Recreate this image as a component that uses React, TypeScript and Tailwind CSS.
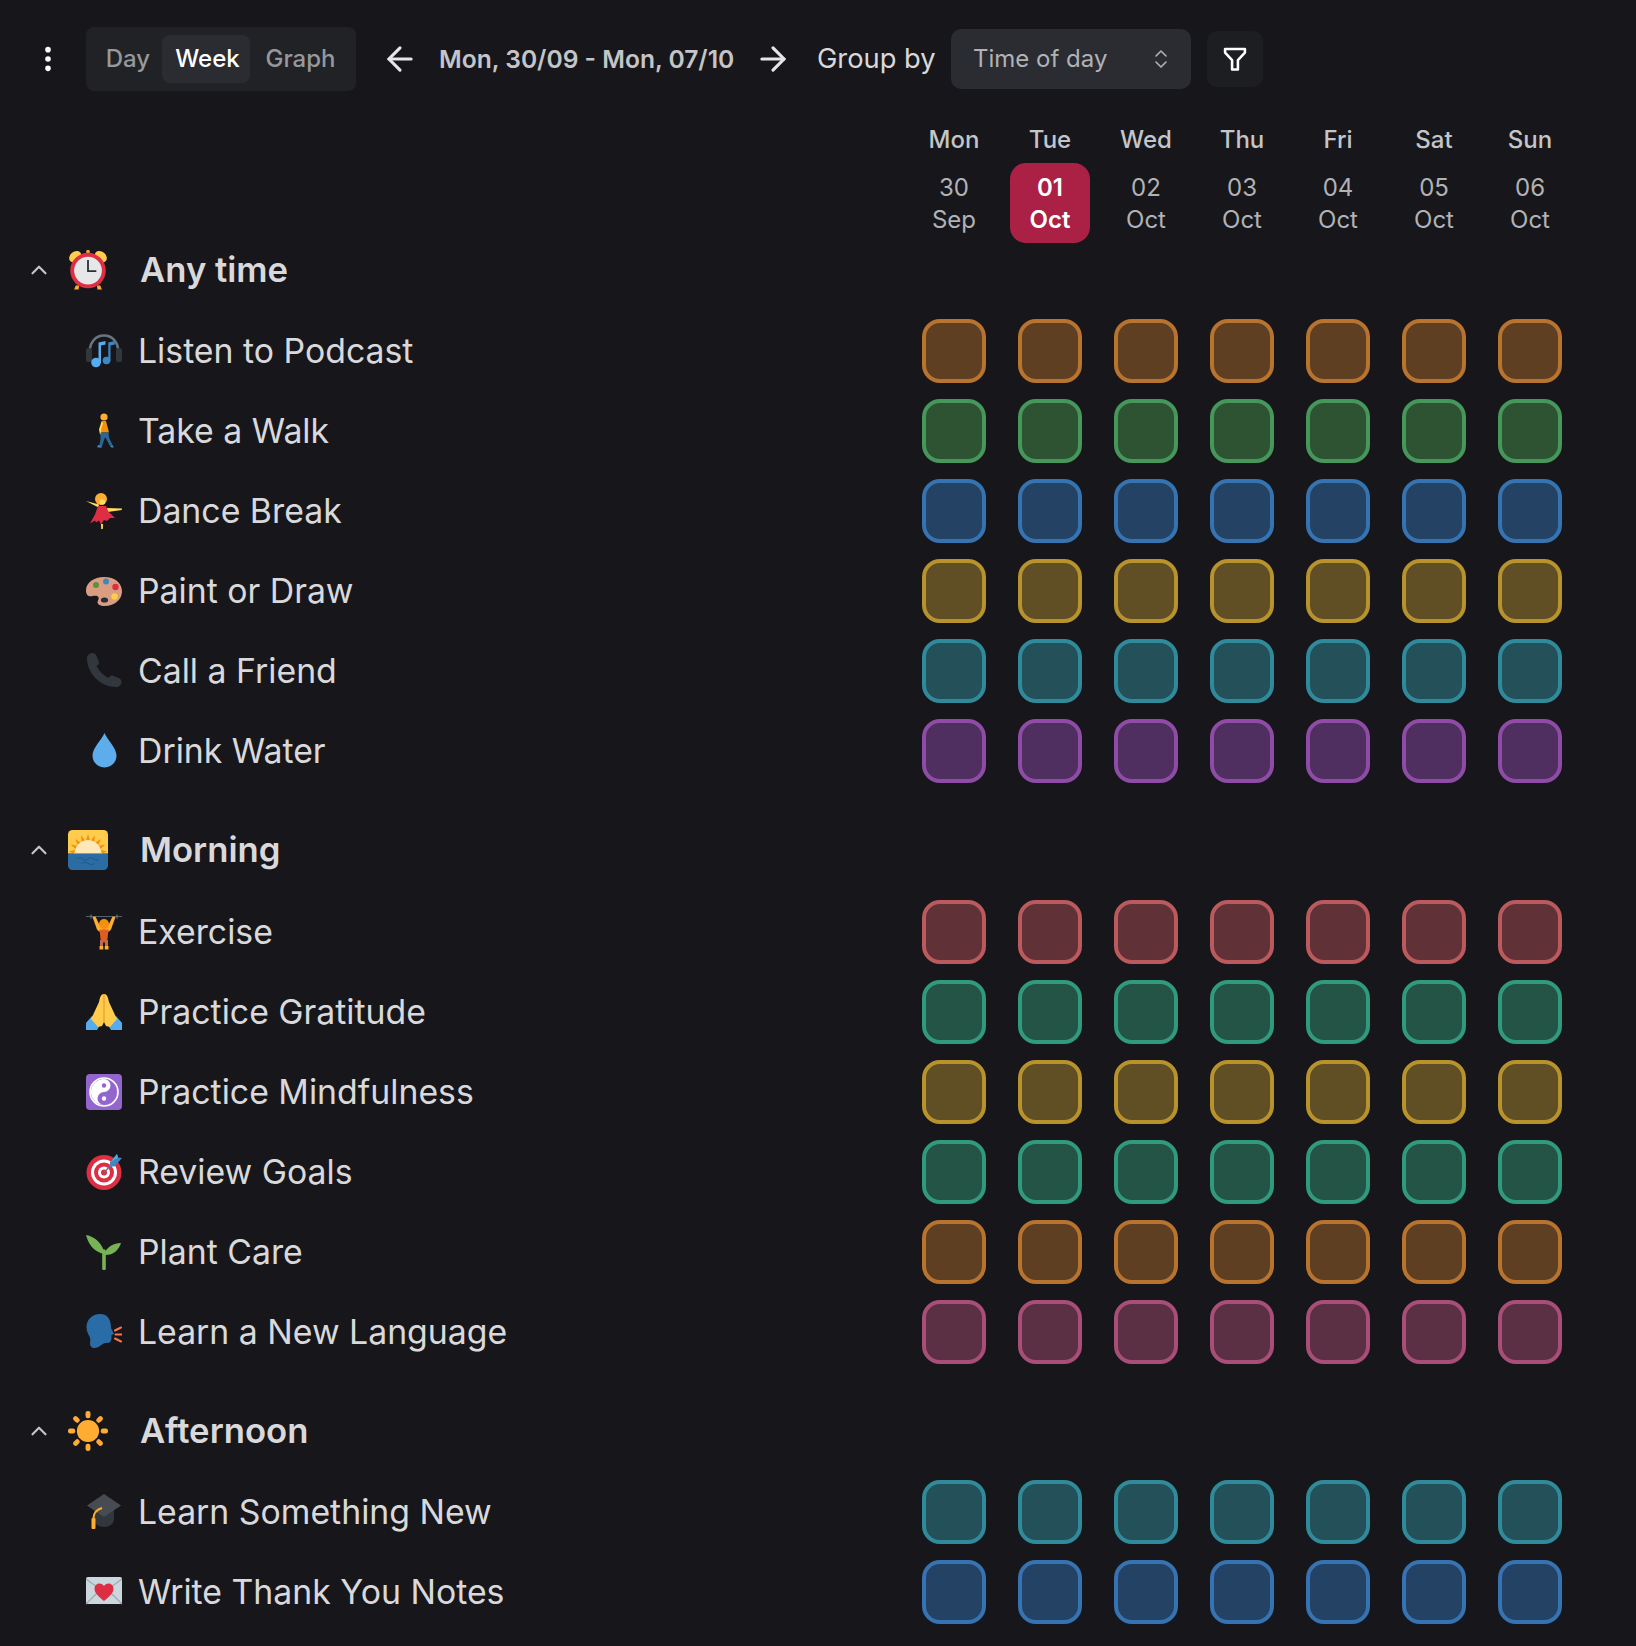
import { ArrowLeft, ArrowRight, ChevronUp, ChevronsUpDown, EllipsisVertical } from 'lucide-react';
import type { ReactNode } from 'react';

// Twemoji-like drawings, all on a 36x36 grid
const emoji: Record<string, ReactNode> = {
  clock: (
    <>
      <ellipse cx="6.500" cy="6" rx="6" ry="4.500" fill="#FFCC4D" transform="rotate(-40 6.500 6)" />
      <ellipse cx="29.500" cy="6" rx="6" ry="4.500" fill="#FFCC4D" transform="rotate(40 29.500 6)" />
      <rect x="16.500" y="0" width="3" height="4" rx="1" fill="#FFAC33" />
      <path d="M7 32l-1.500 3.500h4L10 32zM29 32l1.500 3.500h-4L26 32z" fill="#FFAC33" />
      <circle cx="18" cy="18.500" r="16" fill="#DD2E44" />
      <circle cx="18" cy="18.500" r="12.500" fill="#E6E7E8" />
      <path d="M18 9v10h7.500" fill="none" stroke="#292F33" strokeWidth="1.600" />
    </>
  ),
  headphones: (
    <>
      <path d="M3.500 20C3.500 10 9 2.500 18 2.500S32.500 10 32.500 20" fill="none" stroke="#66757F" strokeWidth="2.600" />
      <rect x="0" y="15" width="6" height="14" rx="2.500" fill="#31373D" />
      <rect x="30" y="15" width="6" height="14" rx="2.500" fill="#31373D" />
      <circle cx="10" cy="29.500" r="4.800" fill="#55ACEE" />
      <path d="M12.500 30V9.500l7-1.500v3.500l-4.500 1V30z" fill="#55ACEE" />
      <circle cx="20.500" cy="27.500" r="3.800" fill="#3B88C3" />
      <path d="M22.300 28V9.500l6.500-1.500v3.500l-4.300 1V28z" fill="#3B88C3" />
    </>
  ),
  walk: (
    <>
      <circle cx="18" cy="4" r="3.600" fill="#FFAC33" />
      <path d="M15.500 8h4.500l3 11.500h-8.500z" fill="#F4900C" />
      <path d="M15.500 8.500l-2.500 8 1 5 1.500-.5-.5-4.500 2-6z" fill="#FFDC5D" />
      <path d="M14.500 19.500h8l.5 5 3.500 7.500-2.500 1-4-7.500-1-1-1.500 4-2 6.500-2.500-.5 1.500-8z" fill="#2A6797" />
      <path d="M12 32l2.500.5v2l-3.500-.2zM24 33l2.500-1 1.300 2.500h-2.500z" fill="#3B88C3" />
    </>
  ),
  dance: (
    <>
      <path d="M0 8l13 3.500-.5 3z" fill="#FFDC5D" />
      <path d="M21 15l15 .5-.3 1.500-14.200 2z" fill="#FFDC5D" />
      <path d="M15 31h2l-.2 5h-1.600z" fill="#FFDC5D" />
      <circle cx="15" cy="6" r="6" fill="#FFAC33" />
      <circle cx="16.500" cy="9" r="2.800" fill="#FFDC5D" />
      <path d="M12 13h8l2 5 7 7-5 0-3 3-3-1-3 4.500-2-4-3 2-1-2-5 3 5-9z" fill="#DD2E44" />
    </>
  ),
  palette: (
    <>
      <path d="M18 4C8 4 0 9.500 0 17.500c0 5 3 6.500 6.500 5.500 5-1.300 7.500 1 5.500 4.500-1.500 3 1 5.500 6.500 5.500C29 33 36 26 36 18.500 36 10 29 4 18 4z" fill="#D99E82" />
      <circle cx="10" cy="12" r="3" fill="#5C913B" />
      <circle cx="20" cy="8.500" r="3" fill="#3B88C3" />
      <circle cx="29.500" cy="14" r="3.200" fill="#DD2E44" />
      <circle cx="28.500" cy="23.500" r="3.200" fill="#FFCC4D" />
      <ellipse cx="18.500" cy="27" rx="3.600" ry="2.600" fill="#292F33" />
    </>
  ),
  phone: <path d="M1 5C1 2 4 0 6.500 0 8.500 0 9.700 1 10.500 3l2.300 5.500c.7 2 0 3-2.300 4.500 2.500 5 7 9.500 12 12 1.500-2.300 2.500-3 4.500-2.300l5.500 2.300c2 .8 3 2 3 4 0 2.500-2 5-5 5C14.500 34 1 20.500 1 5z" fill="#31373D" />,
  drop: <path d="M30.500 22.500C30.500 29.500 25 34.500 18.500 34.500S6.500 29.500 6.500 22.500C6.500 15 15.500 7 18.500 0 21.500 7 30.500 15 30.500 22.500z" fill="#5DADEC" />,
  sunrise: (
    <>
      <path d="M4 0h28a4 4 0 0 1 4 4v18H0V4a4 4 0 0 1 4-4z" fill="#FFCC4D" />
      <path d="M0 21h36v11a4 4 0 0 1-4 4H4a4 4 0 0 1-4-4z" fill="#2B6CA3" />
      {[-84, -63, -42, -21, 0, 21, 42, 63, 84].map((a) => (
        <path key={a} d="M16.200 9.500h3.600L18 3.500z" fill="#F4900C" transform={`rotate(${a} 18 21)`} />
      ))}
      <path d="M6 21a12 12 0 0 1 24 0z" fill="#FFE8B6" />
      <path d="M8 26c2-1.500 3-1.500 5 0s3 1.500 5 0 3-1.500 5 0 3 1.500 5 0M12 30c2-1.500 3-1.500 6 0s4 1.500 6 0" fill="none" stroke="#1F5588" strokeWidth="0.800" />
    </>
  ),
  lift: (
    <>
      <path d="M0 2.500h36" stroke="#66757F" strokeWidth="0.800" />
      <path d="M5 .5v4M31 .5v4" stroke="#66757F" strokeWidth="1.200" />
      <path d="M6.500 3l3-.5 4 8.500h9l4-8.500 3 .5-4.500 12.500-2 2h-10l-2-2z" fill="#FFAC33" />
      <circle cx="18" cy="10" r="5" fill="#F4900C" />
      <path d="M13.500 15.500h9l-1 9-.5 4h-6l-.5-4z" fill="#DD5E1E" />
      <path d="M14 26h3v7h-3zM19 26h3v7h-3z" fill="#C1694F" />
      <path d="M13.500 32h3.700v3.500h-3.700zM18.800 32h3.700v3.500h-3.700z" fill="#FFAC33" />
    </>
  ),
  pray: (
    <>
      <path d="M0 36v-7l6-7 8 9-3 5zM36 36v-7l-6-7-8 9 3 5z" fill="#55ACEE" />
      <path d="M18 0c-3 0-4 3-5 8l-6 13-2 4 7 8 4-1 2-4 2 4 4 1 7-8-2-4-6-13c-1-5-2-8-5-8z" fill="#FFCC4D" />
      <path d="M18 1v27" stroke="#F19020" strokeWidth="1" />
    </>
  ),
  yinyang: (
    <>
      <rect width="36" height="36" rx="4" fill="#9266CC" />
      <circle cx="18" cy="18" r="14" fill="none" stroke="#fff" strokeWidth="1.600" />
      <circle cx="18" cy="18" r="13" fill="#fff" />
      <path d="M18 5a13 13 0 0 1 0 26 6.500 6.500 0 0 1 0-13 6.500 6.500 0 0 0 0-13z" fill="#9266CC" />
      <circle cx="18" cy="11.500" r="2.200" fill="#9266CC" />
      <circle cx="18" cy="24.500" r="2.200" fill="#fff" />
    </>
  ),
  target: (
    <>
      <circle cx="18" cy="18.500" r="17.500" fill="#DD2E44" />
      <circle cx="18" cy="18.500" r="13" fill="#fff" />
      <circle cx="18" cy="18.500" r="10" fill="#DD2E44" />
      <circle cx="18" cy="18.500" r="6" fill="#fff" />
      <circle cx="18" cy="18.500" r="3" fill="#DD2E44" />
      <path d="M18 18.500L29 7" stroke="#66757F" strokeWidth="1.400" />
      <path d="M24 8l7-8 1 3.500 4 .5-7.500 8.500-4.500 0z" fill="#3B88C3" />
      <path d="M25 8l6-8 1 3.500z" fill="#55ACEE" />
    </>
  ),
  plant: (
    <>
      <path d="M18 34.500V17" stroke="#77B255" strokeWidth="3.600" strokeLinecap="round" />
      <path d="M18.500 20C17 10 9 2.500 0 1c2 8 7 17 18.500 19z" fill="#77B255" />
      <path d="M17.500 21C20 14 26 9 35 9c-2 6-7 13-17.500 12z" fill="#77B255" />
    </>
  ),
  speak: (
    <>
      <path d="M14 0C6 0 .5 6 .5 13c0 5 2.500 8 3.500 11 1 3-1 6 1 8.500 2 2.500 6 1.500 9-.5 3-2 3-3 7-3 3 0 4.500-2 4.500-5v-3l2.500-1-3-6C25 6 22 0 14 0z" fill="#2A6CA6" />
      <path d="M29 16.500l6-3M29.500 20.500H36M29 24.500l6 3" stroke="#F4764C" strokeWidth="2" strokeLinecap="round" />
    </>
  ),
  sun: (
    <>
      <circle cx="18" cy="18" r="10" fill="#FFAC33" />
      {[0, 45, 90, 135, 180, 225, 270, 315].map((a) => (
        <rect key={a} x="15.800" y="0" width="4.400" height="6.500" rx="2" fill="#FFAC33" transform={`rotate(${a} 18 18)`} />
      ))}
    </>
  ),
  cap: (
    <>
      <path d="M8 14v11c0 5 5 8 10 8s10-3 10-8V14z" fill="#31373D" />
      <path d="M18 0l17 11.500L18 23 1 11.500z" fill="#464C52" />
      <path d="M16 14c-6 2-8.500 5-8.500 10" fill="none" stroke="#FFAC33" strokeWidth="2" />
      <rect x="5.500" y="24" width="4" height="11" rx="1" fill="#FFAC33" />
    </>
  ),
  mail: (
    <>
      <rect y="3" width="36" height="27" rx="2" fill="#CCD6DD" />
      <path d="M0 5l18 13L36 5M0 30l13-13M36 30L23 17" fill="none" stroke="#99AAB5" strokeWidth="1.200" />
      <path d="M18 27C12 22 8.500 19 8.500 14.500c0-3 2.500-5 5-5 2 0 3.500 1 4.500 2.500 1-1.500 2.500-2.500 4.500-2.500 2.500 0 5 2 5 5C27.500 19 24 22 18 27z" fill="#DD2E44" />
    </>
  ),
};

const Emoji = ({ name, size }: { name: string; size: number }) => (
  <svg viewBox="0 0 36 36" width={size} height={size} className="shrink-0">
    {emoji[name]}
  </svg>
);

const colors: Record<string, string> = {
  orange: 'border-[#b8732f] bg-[#5e3f22]',
  green: 'border-[#46985a] bg-[#2d5333]',
  blue: 'border-[#3573b3] bg-[#234264]',
  yellow: 'border-[#b8922c] bg-[#604e24]',
  teal: 'border-[#2f8b9b] bg-[#24505a]',
  purple: 'border-[#8f4ba5] bg-[#4f2e60]',
  red: 'border-[#bb5a5c] bg-[#603237]',
  emerald: 'border-[#2f9a7d] bg-[#245445]',
  pink: 'border-[#a84e78] bg-[#5b2f44]',
};

const groups = [
  {
    title: 'Any time',
    icon: 'clock',
    rowsClass: 'mt-[25px]',
    items: [
      ['headphones', 'Listen to Podcast', 'orange'],
      ['walk', 'Take a Walk', 'green'],
      ['dance', 'Dance Break', 'blue'],
      ['palette', 'Paint or Draw', 'yellow'],
      ['phone', 'Call a Friend', 'teal'],
      ['drop', 'Drink Water', 'purple'],
    ],
  },
  {
    title: 'Morning',
    icon: 'sunrise',
    rowsClass: 'mt-[26px]',
    items: [
      ['lift', 'Exercise', 'red'],
      ['pray', 'Practice Gratitude', 'emerald'],
      ['yinyang', 'Practice Mindfulness', 'yellow'],
      ['target', 'Review Goals', 'emerald'],
      ['plant', 'Plant Care', 'orange'],
      ['speak', 'Learn a New Language', 'pink'],
    ],
  },
  {
    title: 'Afternoon',
    icon: 'sun',
    rowsClass: 'mt-[25px]',
    items: [
      ['cap', 'Learn Something New', 'teal'],
      ['mail', 'Write Thank You Notes', 'blue'],
    ],
  },
];

const days = [
  ['Mon', '30', 'Sep'],
  ['Tue', '01', 'Oct'],
  ['Wed', '02', 'Oct'],
  ['Thu', '03', 'Oct'],
  ['Fri', '04', 'Oct'],
  ['Sat', '05', 'Oct'],
  ['Sun', '06', 'Oct'],
];

const App = () => {
  return (
    <div className="w-[1636px] min-h-[1646px] bg-[#17171b] pb-[22px] font-['Inter',sans-serif] text-[#d9d9dc]">
      {/* toolbar */}
      <div className="flex items-center pt-[27px] pl-[32px]">
        <EllipsisVertical size={32} strokeWidth={2.2} className="text-white" />
        <div className="ml-[22px] flex h-[64px] w-[270px] items-center rounded-[8px] bg-[#212226] px-[8px] text-[24px] font-medium text-[#97989c]">
          <div className="flex h-[48px] w-[68px] items-center justify-center">Day</div>
          <div className="flex h-[48px] w-[88px] items-center justify-center rounded-[8px] bg-[#2b2c31] pl-[3px] text-white">Week</div>
          <div className="flex h-[48px] w-[98px] items-center justify-center pl-[3px]">Graph</div>
        </div>
        <ArrowLeft size={38} strokeWidth={2} className="ml-[25px] text-[#e6e6e8]" />
        <div className="ml-[20px] w-[295px] text-[24.6px] font-semibold whitespace-nowrap text-[#c4c5c8]">Mon, 30/09 - Mon, 07/10</div>
        <ArrowRight size={38} strokeWidth={2} className="ml-[20px] text-[#e6e6e8]" />
        <div className="ml-[25px] w-[117px] text-[27.3px] whitespace-nowrap text-[#d9d9dc]">Group by</div>
        <div className="ml-[17px] flex h-[60px] w-[240px] items-center justify-between rounded-[10px] bg-[#2b2c31] pr-[18px] pl-[22px] text-[24px] text-[#b1b2b6]">
          <span>Time of day</span>
          <ChevronsUpDown size={24} strokeWidth={1.6} />
        </div>
        <div className="ml-[16px] flex h-[56px] w-[56px] items-center justify-center rounded-[10px] bg-[#1d1e22] text-white">
          <svg viewBox="0 0 24 24" width="28" height="28" fill="none" stroke="currentColor" strokeWidth="2.200" strokeLinejoin="round">
            <path d="M3.500 3.500h17v3l-6 6.500v8h-5v-8l-6-6.500z" />
          </svg>
        </div>
      </div>

      {/* day header */}
      <div className="mt-[33px] flex pl-[906px]">
        {days.map(([name, date, month], i) => (
          <div key={name} className="flex w-[96px] flex-col items-center">
            <div className="h-[32px] text-[24px] leading-[32px] font-medium text-[#c4c5c8]">{name}</div>
            <div className={`mt-[7px] flex h-[80px] w-[80px] flex-col items-center justify-center rounded-[16px] pt-[2px] text-[24px] leading-[32px] ${i === 1 ? 'bg-[#ab2145] font-semibold text-white' : 'text-[#b1b2b6]'}`}>
              <span>{date}</span>
              <span>{month}</span>
            </div>
          </div>
        ))}
      </div>

      {/* habits */}
      <div className="mt-[3px] flex flex-col gap-[43px]">
        {groups.map((g) => (
          <section key={g.title}>
            <div className="flex h-[48px] items-center pl-[26px]">
              <ChevronUp size={26} strokeWidth={2} className="text-[#c4c5c8]" />
              <div className="ml-[16px]">
                <Emoji name={g.icon} size={40} />
              </div>
              <h2 className="ml-[32px] pb-[2px] text-[34.7px] font-semibold">{g.title}</h2>
            </div>
            <div className={`flex flex-col gap-[16px] ${g.rowsClass}`}>
              {g.items.map(([icon, label, color]) => (
                <div key={label} className="flex h-[64px] items-center pl-[86px]">
                  <Emoji name={icon} size={36} />
                  <div className="ml-[16px] w-[768px] pt-[1px] text-[33.8px] whitespace-nowrap">{label}</div>
                  <div className="flex">
                    {days.map(([d]) => (
                      <div key={d} className="flex w-[96px] justify-center">
                        <div className={`h-[64px] w-[64px] rounded-[18px] border-[4px] ${colors[color]}`} />
                      </div>
                    ))}
                  </div>
                </div>
              ))}
            </div>
          </section>
        ))}
      </div>
    </div>
  );
};

export default App;
